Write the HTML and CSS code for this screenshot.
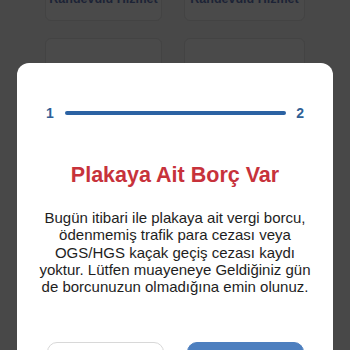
FILE: index.html
```html
<!DOCTYPE html>
<html lang="tr">
<head>
<meta charset="utf-8">
<link rel="stylesheet" href="styles.css">
</head>
<body>
<div class="page">
  <div class="grid">
    <div class="card"><span class="card-title">Randevulu Hizmet</span></div>
    <div class="card"><span class="card-title">Randevulu Hizmet</span></div>
    <div class="card"></div>
    <div class="card"></div>
  </div>
</div>
<div class="modal">
  <div class="stepper">
    <span class="step">1</span>
    <span class="bar"></span>
    <span class="step">2</span>
  </div>
  <h1 class="title">Plakaya Ait Borç Var</h1>
  <p class="text">Bugün itibari ile plakaya ait vergi borcu, ödenmemiş trafik para cezası veya OGS/HGS kaçak geçiş cezası kaydı yoktur. Lütfen muayeneye Geldiğiniz gün de borcunuzun olmadığına emin olunuz.</p>
  <div class="actions">
    <button class="btn btn-outline">Geri Dön</button>
    <button class="btn btn-primary">Devam Et</button>
  </div>
</div>
</body>
</html>
```
FILE: styles.css
```css
html, body {
  margin: 0;
  padding: 0;
  width: 350px;
  height: 350px;
  overflow: hidden;
  background: #484848;
  font-family: "Liberation Sans", Arial, sans-serif;
}
.page {
  padding: 0 44px 0 45px;
}
.grid {
  margin-top: -68px;
  display: grid;
  grid-template-columns: 117px 121px;
  column-gap: 22px;
  row-gap: 17px;
}
.card {
  height: 89px;
  background: #4a4a4a;
  border: 1px solid #434343;
  border-radius: 6px;
  display: flex;
  align-items: flex-end;
  justify-content: center;
  padding-bottom: 14px;
  box-sizing: border-box;
}
.card-title {
  font-size: 12.5px;
  font-weight: bold;
  color: #1c2336;
  line-height: 14px;
  white-space: nowrap;
}
.modal {
  position: absolute;
  left: 17px;
  top: 63px;
  width: 316px;
  height: 320px;
  background: #ffffff;
  border-radius: 12px;
  box-sizing: border-box;
  padding: 42px 20px 0;
}
.stepper {
  display: flex;
  align-items: center;
  padding: 0 9px;
  height: 16px;
}
.step {
  font-size: 14px;
  font-weight: bold;
  color: #2f5f96;
  line-height: 16px;
}
.bar {
  flex: 1;
  height: 4px;
  background: #2b62a3;
  border-radius: 2px;
  margin: 0 10px 0 11px;
}
.title {
  margin: 41.5px 0 0;
  font-size: 21.5px;
  line-height: 25px;
  font-weight: bold;
  color: #c7323b;
  text-align: center;
}
.text {
  margin: 21.5px 0 0;
  font-size: 15px;
  line-height: 17.25px;
  color: #1e1e1e;
  text-align: center;
}
.actions {
  margin-top: 47px;
  display: flex;
  gap: 23px;
  padding: 0 9px 0 10px;
}
.btn {
  flex: 1;
  height: 44px;
  border-radius: 10px;
  font-family: "Liberation Sans", Arial, sans-serif;
  font-size: 15px;
  font-weight: bold;
}
.btn-outline {
  background: #ffffff;
  border: 1px solid #d8d8d8;
  color: #333333;
}
.btn-primary {
  background: #4d7fbf;
  border: 1px solid #4d7fbf;
  color: #ffffff;
}
```
